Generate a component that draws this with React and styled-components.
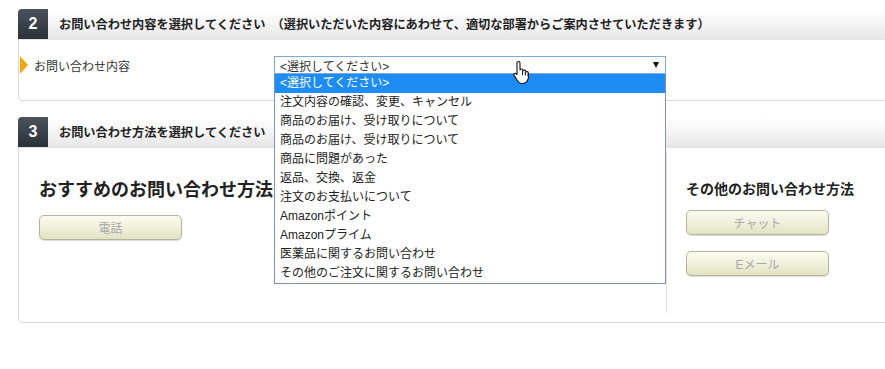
import styled, { createGlobalStyle } from 'styled-components';

const GlobalStyle = createGlobalStyle`
  html, body {
    margin: 0;
    padding: 0;
    overflow: hidden;
    background: #fff;
  }
  body {
    font-family: "Liberation Sans", "Noto Sans CJK JP", sans-serif;
    color: #333;
  }
`;

const Page = styled.div`
  padding: 9px 0 0 18px;
  width: 900px;
`;

const Section = styled.section`
  border: 1px solid #d9d9d9;
  border-radius: 4px;
  background: #fff;
  margin-bottom: 16px;
  position: relative;
  z-index: ${(p) => p.$layer || 0};
`;

const Header = styled.div`
  display: flex;
  align-items: center;
  height: 30px;
  margin: -1px 0 0 -1px;
  background: linear-gradient(#ffffff 0%, #f4f4f4 50%, #e6e6e6 100%);
  border-bottom: 1px solid #e2e2e2;
`;

const Badge = styled.div`
  width: 30px;
  height: 30px;
  display: flex;
  align-items: center;
  justify-content: center;
  background: linear-gradient(#4b535c, #2a3139);
  border-radius: 4px 0 0 0;
  color: #fff;
  font-weight: bold;
  font-size: 16px;
  font-family: "Liberation Sans", sans-serif;
`;

const HeaderTitle = styled.div`
  margin-left: 11px;
  font-size: 12.2px;
  font-weight: bold;
  color: #222;
  white-space: nowrap;
`;

const Body2 = styled.div`
  padding: 16px 0 26px 1px;
`;

const FieldRow = styled.div`
  display: flex;
  align-items: center;
`;

const Label = styled.div`
  width: 254px;
  display: flex;
  align-items: center;
  font-size: 12px;
  color: #333;
`;

const Marker = styled.span`
  width: 0;
  height: 0;
  border-top: 9px solid transparent;
  border-bottom: 9px solid transparent;
  border-left: 8px solid #f1a80f;
  margin-right: 6px;
`;

const SelectWrap = styled.div`
  position: relative;
  width: 392px;
`;

const SelectBox = styled.div`
  box-sizing: border-box;
  height: 18px;
  border: 1px solid #7ea6e0;
  display: flex;
  align-items: center;
  justify-content: space-between;
  padding: 0 6px 0 5px;
  font-size: 12px;
  color: #333;
  background: #fff;
`;

const Arrow = styled.span`
  width: 0;
  height: 0;
  border-left: 3px solid transparent;
  border-right: 3px solid transparent;
  border-top: 6px solid #111;
`;

const OptionList = styled.ul`
  position: absolute;
  top: 18px;
  left: 0;
  box-sizing: border-box;
  width: 392px;
  margin: 0;
  padding: 0;
  list-style: none;
  border: 1px solid #7f92b6;
  border-top: none;
  background: #fff;
  z-index: 5;
`;

const Option = styled.li`
  height: 19px;
  line-height: 19px;
  padding-left: 5px;
  font-size: 12px;
  color: ${(p) => (p.$active ? '#fff' : '#222')};
  background: ${(p) => (p.$active ? '#1e8cf7' : '#fff')};
  white-space: nowrap;
`;

const Cursor = styled.svg`
  position: absolute;
  left: 238px;
  top: 4px;
  z-index: 6;
`;

const Body3 = styled.div`
  display: flex;
  height: 174px;
`;

const MainCol = styled.div`
  width: 627px;
  padding: 32px 0 0 20px;
`;

const SideCol = styled.div`
  box-sizing: border-box;
  margin-top: 3px;
  height: 162px;
  border-left: 1px solid #e2e2e2;
  padding: 30px 0 0 19px;
`;

const BigTitle = styled.h2`
  margin: 0;
  font-size: 18px;
  line-height: 20px;
  font-weight: bold;
  color: #222;
  white-space: nowrap;
`;

const SmallTitle = styled.h3`
  margin: 0;
  font-size: 14px;
  line-height: 16px;
  font-weight: bold;
  color: #222;
  white-space: nowrap;
`;

const MethodButton = styled.button`
  display: block;
  box-sizing: border-box;
  width: 143px;
  height: 25px;
  margin-top: ${(p) => p.$gap}px;
  border: 1px solid #b6b59a;
  border-radius: 5px;
  background: linear-gradient(#fbfbf1 0%, #f0f0dc 50%, #e2e2c4 100%);
  box-shadow: 0 1px 1px rgba(0, 0, 0, 0.15);
  color: #a9a9a9;
  font-size: 12px;
  font-family: inherit;
  padding: 0;
`;

const options = [
  '<選択してください>',
  '注文内容の確認、変更、キャンセル',
  '商品のお届け、受け取りについて',
  '商品のお届け、受け取りについて',
  '商品に問題があった',
  '返品、交換、返金',
  '注文のお支払いについて',
  'Amazonポイント',
  'Amazonプライム',
  '医薬品に関するお問い合わせ',
  'その他のご注文に関するお問い合わせ',
];

const HandCursor = () => (
  <Cursor width="20" height="26" viewBox="0 0 20 26">
    <path
      d="M6.5 1.5c.9 0 1.5.7 1.5 1.5v7c.3-.6.9-1 1.6-1 .8 0 1.4.6 1.4 1.3v.6c.3-.5.8-.8 1.4-.8.8 0 1.4.6 1.4 1.4v.7c.3-.4.7-.6 1.2-.6.8 0 1.4.6 1.4 1.4V17c0 3.6-2.5 6.5-5.7 6.5H9.8c-1.6 0-3.1-.8-4-2.2L2.2 15.6c-.5-.7-.3-1.6.4-2.1.6-.4 1.4-.3 1.9.3L5 14.6V3c0-.8.6-1.5 1.5-1.5z"
      fill="#fff"
      stroke="#111"
      strokeWidth="1.1"
      strokeLinejoin="round"
    />
    <path d="M10.5 11v4M13.3 12v3.5M16 13.5v2.5" stroke="#111" strokeWidth="1" />
  </Cursor>
);

export default function App() {
  return (
    <>
      <GlobalStyle />
      <Page>
        <Section $layer={2}>
          <Header>
            <Badge>2</Badge>
            <HeaderTitle>
              お問い合わせ内容を選択してください　（選択いただいた内容にあわせて、適切な部署からご案内させていただきます）
            </HeaderTitle>
          </Header>
          <Body2>
            <FieldRow>
              <Label>
                <Marker />
                お問い合わせ内容
              </Label>
              <SelectWrap>
                <SelectBox>
                  <span>&lt;選択してください&gt;</span>
                  <Arrow />
                </SelectBox>
                <OptionList>
                  {options.map((o, i) => (
                    <Option key={i} $active={i === 0}>
                      {o}
                    </Option>
                  ))}
                </OptionList>
                <HandCursor />
              </SelectWrap>
            </FieldRow>
          </Body2>
        </Section>

        <Section $layer={1}>
          <Header>
            <Badge>3</Badge>
            <HeaderTitle>お問い合わせ方法を選択してください</HeaderTitle>
          </Header>
          <Body3>
            <MainCol>
              <BigTitle>おすすめのお問い合わせ方法</BigTitle>
              <MethodButton $gap={15}>電話</MethodButton>
            </MainCol>
            <SideCol>
              <SmallTitle>その他のお問い合わせ方法</SmallTitle>
              <MethodButton $gap={13}>チャット</MethodButton>
              <MethodButton $gap={16}>Eメール</MethodButton>
            </SideCol>
          </Body3>
        </Section>
      </Page>
    </>
  );
}
